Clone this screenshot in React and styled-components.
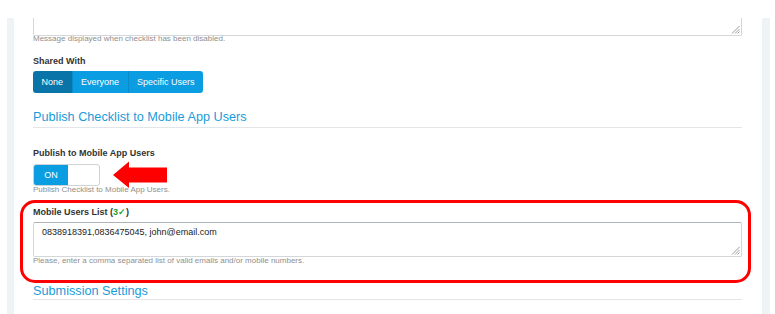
import React from "react"
import styled, { createGlobalStyle } from "styled-components"

const GlobalStyle = createGlobalStyle`
    html, body {
        margin: 0;
        padding: 0;
        background: #ffffff;
        font-family: "Liberation Sans", Arial, sans-serif;
    }
`

const Page = styled.div`
        display: flex;
        height: 314px;
        padding-top: 18px;
        box-sizing: border-box;
        overflow: hidden;
        background: #fff;
    `

const Rail = styled.div`
        width: ${props => props.w}px;
        margin-left: ${props => props.ml || 0}px;
        margin-right: ${props => props.mr || 0}px;
        background: #eef3f6;
        flex-shrink: 0;
    `

const Main = styled.div`
        flex: 1;
        padding: 0 20px 0 19px;
        min-width: 0;
    `

const TextBox = styled.div`
        position: relative;
        height: ${props => props.h}px;
        box-sizing: border-box;
        border: 1px solid #d4d7d9;
        border-top: ${props => props.clipped ? "none" : "1px solid #aeb3b7"};
        border-radius: ${props => props.clipped ? "0 0 2px 2px" : "2px"};
        padding: 4px 8px;
        font-size: 9px;
        line-height: 11px;
        color: #222;
        background: #fff;
    `

const Grip = styled.svg`
        position: absolute;
        right: 1px;
        bottom: 1px;
    `

const Help = styled.p`
        margin: ${props => props.mt || 0}px 0 0;
        font-size: 8px;
        line-height: 10px;
        color: #8f8f8f;
    `

const Label = styled.p`
        margin: ${props => props.mt || 0}px 0 0;
        font-size: 9px;
        line-height: 11px;
        font-weight: bold;
        color: #333;
    `

const Count = styled.span`
        color: #2b9a2b;
    `

const BtnGroup = styled.div`
        display: inline-flex;
        margin-top: 4px;
        border-radius: 3px;
        overflow: hidden;
    `

const GroupBtn = styled.button`
        height: 22px;
        padding: 0 8.5px;
        border: none;
        border-left: ${props => props.first ? "none" : "1px solid #0a8ccc"};
        background: ${props => props.active ? "#0874a8" : "#0b9de1"};
        color: #fff;
        font-family: inherit;
        font-size: 9px;
        cursor: pointer;
    `

const Heading = styled.h2`
        margin: ${props => props.mt}px 0 0;
        padding-bottom: ${props => props.pb}px;
        border-bottom: 1px solid #e3e6e8;
        font-size: 12.7px;
        line-height: 15px;
        font-weight: normal;
        color: #1a9cd9;
    `

const ToggleField = styled.div`
        position: relative;
    `

const Toggle = styled.div`
        display: flex;
        width: 67px;
        height: 22px;
        margin-top: 5px;
        box-sizing: border-box;
        border: 1px solid #cfd3d6;
        border-radius: 3px;
        overflow: hidden;
        background: #fff;
    `

const ToggleOn = styled.span`
        width: 34px;
        display: flex;
        align-items: center;
        justify-content: center;
        background: #0b9de1;
        color: #fff;
        font-size: 9px;
    `

const Arrow = styled.svg`
        position: absolute;
        left: 80px;
        top: 13px;
    `

const Highlight = styled.div`
        position: relative;
        margin-top: 12px;

        &::after {
            content: "";
            position: absolute;
            top: -7px;
            left: -13px;
            right: -9px;
            bottom: -17px;
            border: 3.5px solid #ff0000;
            border-radius: 15px;
            pointer-events: none;
        }
    `

function ResizeGrip() {
    return (
        <Grip width="9" height="9" viewBox="0 0 9 9">
            <path d="M8.5 1 L1 8.5 M8.5 4 L4 8.5 M8.5 6.5 L6.5 8.5" stroke="#9a9a9a" strokeWidth="1" />
        </Grip>
    )
}

export default function App() {
    return (
        <>
            <GlobalStyle />
            <Page>
                <Rail w={7} ml={7} />
                <Main>
                    <TextBox h={18} clipped>
                        <ResizeGrip />
                    </TextBox>
                    <Help mt={-2}>Message displayed when checklist has been disabled.</Help>

                    <Label mt={12}>Shared With</Label>
                    <BtnGroup>
                        <GroupBtn first active>None</GroupBtn>
                        <GroupBtn>Everyone</GroupBtn>
                        <GroupBtn>Specific Users</GroupBtn>
                    </BtnGroup>

                    <Heading mt={17} pb={2}>Publish Checklist to Mobile App Users</Heading>

                    <ToggleField>
                        <Label mt={20}>Publish to Mobile App Users</Label>
                        <Toggle>
                            <ToggleOn>ON</ToggleOn>
                        </Toggle>
                        <Help mt={-1}>Publish Checklist to Mobile App Users.</Help>
                        <Arrow width="54" height="28" viewBox="0 0 54 28">
                            <polygon points="0,14 16,0.5 16,6.5 54,6.5 54,21.5 16,21.5 16,27" fill="#ff0000" />
                        </Arrow>
                    </ToggleField>

                    <Highlight>
                        <Label>Mobile Users List (<Count>3✓</Count>)</Label>
                        <TextBox h={35} style={{ marginTop: 4 }}>
                            0838918391,0836475045, john@email.com
                            <ResizeGrip />
                        </TextBox>
                        <Help mt={-1}>Please, enter a comma separated list of valid emails and/or mobile numbers.</Help>
                    </Highlight>

                    <Heading mt={18} pb={0}>Submission Settings</Heading>
                </Main>
                <Rail w={8} mr={5} />
            </Page>
        </>
    )
}
